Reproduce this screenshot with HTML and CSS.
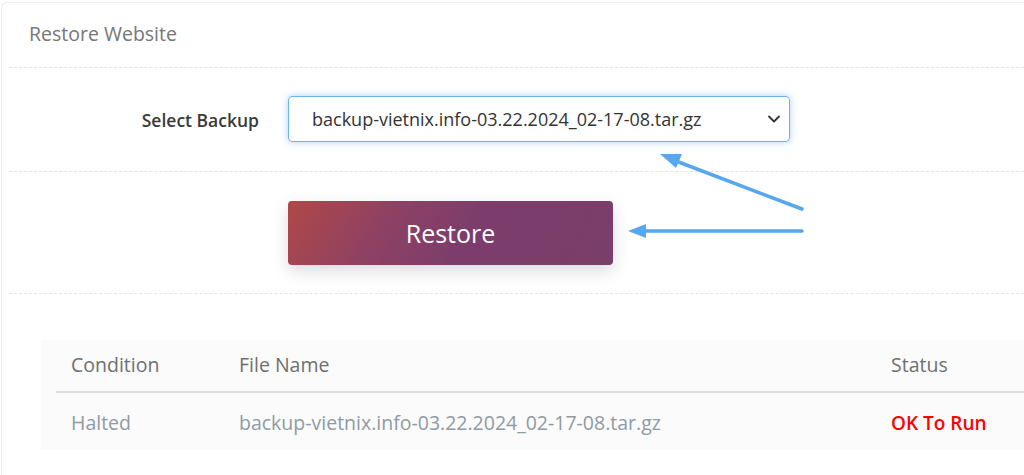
FILE: index.html
```html
<!DOCTYPE html>
<html>
<head>
<meta charset="utf-8">
<link rel="stylesheet" href="styles.css">
</head>
<body>
<div class="card">
  <div class="card-header">Restore Website</div>
  <div class="sep"></div>
  <div class="form-row row-select">
    <label class="label">Select Backup</label>
    <div class="select">
      <span class="select-text">backup-vietnix.info-03.22.2024_02-17-08.tar.gz</span>
      <svg class="chev" width="14" height="10" viewBox="0 0 14 10"><path d="M2 2.5 L7 7.5 L12 2.5" fill="none" stroke="#333" stroke-width="1.8" stroke-linecap="round" stroke-linejoin="round"/></svg>
    </div>
  </div>
  <div class="sep"></div>
  <div class="form-row row-btn">
    <div class="label"></div>
    <button class="btn">Restore</button>
  </div>
  <div class="sep"></div>
  <div class="table-wrap">
    <table class="tbl">
      <thead>
        <tr><th class="c1">Condition</th><th class="c2">File Name</th><th class="c3">Status</th></tr>
      </thead>
      <tbody>
        <tr><td class="c1">Halted</td><td class="c2">backup-vietnix.info-03.22.2024_02-17-08.tar.gz</td><td class="c3 ok">OK To Run</td></tr>
      </tbody>
    </table>
  </div>
</div>
<svg class="arrows" width="1024" height="475" viewBox="0 0 1024 475">
  <line x1="802" y1="209" x2="676" y2="161" stroke="#55a7f0" stroke-width="3.5" stroke-linecap="round"/>
  <polygon points="660,154 682,154 676,168" fill="#55a7f0"/>
  <line x1="802" y1="231" x2="642" y2="231" stroke="#55a7f0" stroke-width="3.5" stroke-linecap="round"/>
  <polygon points="628,231 646,224 646,238" fill="#55a7f0"/>
</svg>
</body>
</html>
```

FILE: styles.css
```css
html, body {
  margin: 0;
  padding: 0;
  background: #fff;
  overflow: hidden;
  width: 1024px;
  height: 475px;
}
body {
  font-family: "Open Sans", "Noto Sans", sans-serif;
  position: relative;
}
.card {
  margin: 2px 0 0 1px;
  width: 1023px;
  height: 473px;
  border: 1px solid #ececec;
  border-right: none;
  border-bottom: none;
  border-radius: 6px 0 0 0;
  box-sizing: border-box;
  overflow: hidden;
}
.card-header {
  height: 64px;
  padding-left: 27px;
  font-size: 19.5px;
  color: #767676;
  line-height: 62px;
}
.sep {
  margin-left: 7px;
  border-top: 1px dashed #e6e6e6;
}
.form-row {
  display: flex;
  align-items: center;
  margin-left: 7px;
  gap: 29px;
}
.row-select {
  height: 103px;
}
.row-btn {
  height: 121px;
}
.label {
  width: 250px;
  flex: none;
  text-align: right;
  font-size: 17.5px;
  font-weight: 600;
  color: #3a3a3a;
}
.select {
  width: 502px;
  height: 46px;
  box-sizing: border-box;
  border: 1px solid #6cb3ef;
  border-radius: 4px;
  box-shadow: 0 0 7px rgba(90, 165, 235, 0.5);
  display: flex;
  align-items: center;
  justify-content: space-between;
  padding: 0 8px 0 23px;
  margin-bottom: 2px;
}
.select-text {
  font-size: 18px;
  color: #333;
}
.chev {
  display: block;
}
.btn {
  width: 325px;
  height: 64px;
  border: none;
  border-radius: 4px;
  background: linear-gradient(120deg, #b04848 0%, #8e4163 30%, #7c3d6c 55%, #7a3e6a 100%);
  color: #fff;
  font-family: "Open Sans", "Noto Sans", sans-serif;
  font-size: 25px;
  box-shadow: 0 6px 16px rgba(60, 60, 90, 0.18);
  padding: 0;
}
.table-wrap {
  margin: 46px 0 0 39px;
  background: #fbfbfb;
  padding: 0 0 0 15px;
  height: 110px;
}
.tbl {
  border-collapse: collapse;
  width: 100%;
  font-size: 19.5px;
}
.tbl th {
  font-weight: 400;
  color: #6f6f6f;
  text-align: left;
  height: 52px;
  box-sizing: border-box;
  padding: 0 15px 3px;
  border-bottom: 2px solid #dedede;
}
.tbl td {
  color: #8f9aa3;
  height: 58px;
  box-sizing: border-box;
  padding: 2px 15px 0;
}
.c1 { width: 168px; }
.c2 { width: 652px; }
.tbl td.ok {
  color: #ff0000;
  font-weight: 600;
  font-size: 19px;
}
.arrows {
  position: absolute;
  left: 0;
  top: 0;
  pointer-events: none;
}
```
